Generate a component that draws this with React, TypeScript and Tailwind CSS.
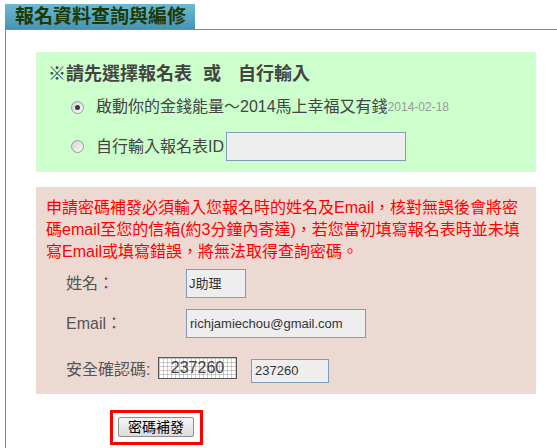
import React from "react";

function Radio({ checked }: { checked?: boolean }) {
  return (
    <span className="flex h-[13px] w-[13px] shrink-0 items-center justify-center rounded-full border border-[#9a9a9a] bg-gradient-to-br from-[#d4d4d4] to-[#fafafa]">
      {checked ? <span className="h-[5px] w-[5px] rounded-full bg-[#3a3a3a]" /> : null}
    </span>
  );
}

function Captcha() {
  return (
    <div className="relative flex h-[22px] w-[79px] items-center justify-center border border-[#555] bg-white">
      <svg className="absolute inset-0 h-full w-full" aria-hidden="true">
        <defs>
          <pattern id="grid" width="4" height="4" patternUnits="userSpaceOnUse">
            <path d="M4 0 L0 0 0 4" fill="none" stroke="#9a9a9a" strokeWidth="1" />
          </pattern>
        </defs>
        <rect width="100%" height="100%" fill="url(#grid)" />
      </svg>
      <span className="relative text-[16px] leading-none text-[#444]">237260</span>
    </div>
  );
}

export default function App() {
  return (
    <div className="flex h-[448px] w-[557px] flex-col overflow-hidden bg-white pl-[5px] pt-[4px] font-['Liberation_Sans','Noto_Sans_CJK_TC',sans-serif]">
      <div className="h-[25px] w-[190px] shrink-0 whitespace-nowrap bg-gradient-to-b from-[#6cbad4] to-[#4893b3] pl-[10px] text-[19px] font-bold leading-[25px] text-[#1c3a06]">
        報名資料查詢與編修
      </div>
      <div className="flex flex-1 flex-col border-l border-t border-[#4e9bba]">
        <div className="ml-[30px] mt-[22px] w-[500px] bg-[#ccffcc] pb-[11px] pl-[12px] pt-[10px]">
          <div className="h-[24px] text-[18px] font-bold leading-[24px] text-[#444]">
            ※請先選擇報名表<span className="inline-block w-[11px]" />或<span className="inline-block w-[17px]" />自行輸入
          </div>
          <div className="ml-[23px] mt-[9px] flex h-[24px] items-center">
            <Radio checked />
            <span className="ml-[12px] text-[16px] leading-[24px] text-[#444]">
              啟動你的金錢能量～2014馬上幸福又有錢
            </span>
            <span className="text-[12px] text-[#999]">2014-02-18</span>
          </div>
          <div className="ml-[23px] mt-[13px] flex h-[29px] items-center">
            <Radio />
            <span className="ml-[12px] text-[16px] text-[#444]">自行輸入報名表ID</span>
            <div className="ml-[2px] h-[29px] w-[180px] border border-[#7f9db9] bg-[#eeeeee]" />
          </div>
        </div>

        <div className="ml-[30px] mt-[15px] w-[500px] bg-[#ecdad2] px-[10px] pb-[11px] pt-[10px]">
          <div className="text-[16px] leading-[22px] text-[#ff0000]">
            <div>申請密碼補發必須輸入您報名時的姓名及Email，核對無誤後會將密</div>
            <div>碼email至您的信箱(約3分鐘內寄達)，若您當初填寫報名表時並未填</div>
            <div>寫Email或填寫錯誤，將無法取得查詢密碼。</div>
          </div>
          <div className="pl-[20px]">
            <div className="mt-[6px] flex items-center">
              <div className="w-[120px] text-[16px] text-[#555]">姓名：</div>
              <div className="flex h-[29px] w-[60px] items-center border border-[#7f9db9] bg-[#eeeeee] pl-[2px] text-[13px] text-[#333]">
                J助理
              </div>
            </div>
            <div className="mt-[11px] flex items-center">
              <div className="w-[120px] text-[16px] text-[#555]">Email：</div>
              <div className="flex h-[29px] w-[180px] items-center border border-[#7f9db9] bg-[#eeeeee] pl-[3px] text-[13px] text-[#333]">
                richjamiechou@gmail.com
              </div>
            </div>
            <div className="mt-[19px] flex items-start">
              <div className="h-[26px] w-[92px] text-[16px] leading-[26px] text-[#555]">安全確認碼:</div>
              <Captcha />
              <div className="ml-[14px] mt-[2px] flex h-[24px] w-[78px] items-center border border-[#7f9db9] bg-[#eeeeee] pl-[3px] text-[13px] text-[#333]">
                237260
              </div>
            </div>
          </div>
        </div>

        <div className="ml-[104px] mt-[16px] w-[93px] border-[3px] border-[#ff0000] pb-[5px] pl-[5px] pt-[4px]">
          <button className="flex h-[20px] w-[76px] items-center justify-center rounded-[2px] border border-[#8e8e8e] bg-gradient-to-b from-[#f6f6f6] to-[#dcdcdc] text-[14px] leading-none text-black">
            密碼補發
          </button>
        </div>
      </div>
    </div>
  );
}
